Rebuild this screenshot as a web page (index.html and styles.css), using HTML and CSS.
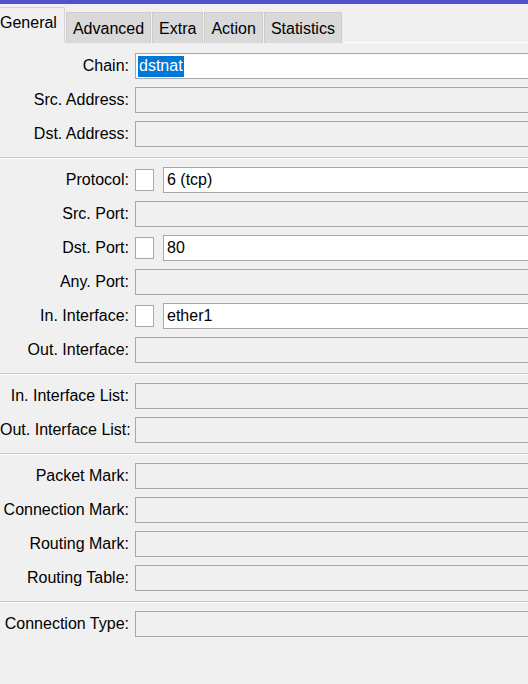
FILE: index.html
```html
<!DOCTYPE html>
<html>
<head>
<meta charset="utf-8">
<link rel="stylesheet" href="styles.css">
</head>
<body>
<div class="topbar"></div>
<div class="tabs">
  <div class="tab active">General</div>
  <div class="tab">Advanced</div>
  <div class="tab">Extra</div>
  <div class="tab">Action</div>
  <div class="tab">Statistics</div>
  <div class="tab-fill"></div>
</div>
<div class="form">
  <div class="row"><div class="label">Chain:</div><div class="field white"><span class="sel">dstnat</span></div></div>
  <div class="row"><div class="label">Src. Address:</div><div class="field"></div></div>
  <div class="row"><div class="label">Dst. Address:</div><div class="field"></div></div>
  <div class="sep"></div>
  <div class="row"><div class="label">Protocol:</div><div class="check"></div><div class="field white">6 (tcp)</div></div>
  <div class="row"><div class="label">Src. Port:</div><div class="field"></div></div>
  <div class="row"><div class="label">Dst. Port:</div><div class="check"></div><div class="field white">80</div></div>
  <div class="row"><div class="label">Any. Port:</div><div class="field"></div></div>
  <div class="row"><div class="label">In. Interface:</div><div class="check"></div><div class="field white">ether1</div></div>
  <div class="row"><div class="label">Out. Interface:</div><div class="field"></div></div>
  <div class="sep"></div>
  <div class="row"><div class="label">In. Interface List:</div><div class="field"></div></div>
  <div class="row"><div class="label">Out. Interface List:</div><div class="field"></div></div>
  <div class="sep"></div>
  <div class="row"><div class="label">Packet Mark:</div><div class="field"></div></div>
  <div class="row"><div class="label">Connection Mark:</div><div class="field"></div></div>
  <div class="row"><div class="label">Routing Mark:</div><div class="field"></div></div>
  <div class="row"><div class="label">Routing Table:</div><div class="field"></div></div>
  <div class="sep"></div>
  <div class="row"><div class="label">Connection Type:</div><div class="field"></div></div>
</div>
</body>
</html>
```
FILE: styles.css
```css
html, body {
  margin: 0;
  padding: 0;
  background: #f0f0f0;
  overflow: hidden;
}
body {
  font-family: "Liberation Sans", Arial, sans-serif;
  font-size: 16px;
  color: #000;
  width: 528px;
  height: 684px;
}
.topbar {
  height: 4px;
  background: #5151c9;
}
.tabs {
  display: flex;
  align-items: flex-end;
  height: 39px;
  margin-left: -8px;
}
.tab {
  box-sizing: border-box;
  height: 31px;
  padding: 0 6px;
  margin-right: 1px;
  background: #d9d9d9;
  border: 1px solid #cdcdcd;
  border-bottom: none;
  display: flex;
  align-items: center;
  padding-top: 1px;
  white-space: nowrap;
}
.tab.active {
  height: 36px;
  background: #f0f0f0;
  border-color: #d6d6d6;
  padding: 0 7px 6px 7px;
  align-items: center;
}
.tab-fill {
  flex: 1;
  align-self: flex-end;
  height: 2px;
  border-bottom: 1px solid #ffffff;
}
.form {
  padding-top: 10px;
  display: flex;
  flex-direction: column;
  gap: 8px;
}
.row {
  display: flex;
  align-items: center;
  height: 26px;
}
.label {
  width: 129px;
  flex: none;
  text-align: right;
  white-space: nowrap;
  margin-right: 6px;
}
.field {
  flex: 1;
  box-sizing: border-box;
  height: 26px;
  border: 1px solid #a8a8a8;
  border-right: none;
  background: #f0f0f0;
  padding-left: 3px;
  display: flex;
  align-items: center;
  white-space: nowrap;
}
.field.white {
  background: #ffffff;
}
.check {
  flex: none;
  box-sizing: border-box;
  width: 19px;
  height: 22px;
  border: 1px solid #a8a8a8;
  background: #ffffff;
  margin-right: 9px;
}
.sel {
  background: #0078d7;
  color: #ffffff;
  margin-left: -1px;
  padding: 1px 1px 2px 1px;
}
.sep {
  height: 1px;
  border-top: 1px solid #c9c9c9;
  background: #ffffff;
  margin: 2px 0 0 0;
}
```
